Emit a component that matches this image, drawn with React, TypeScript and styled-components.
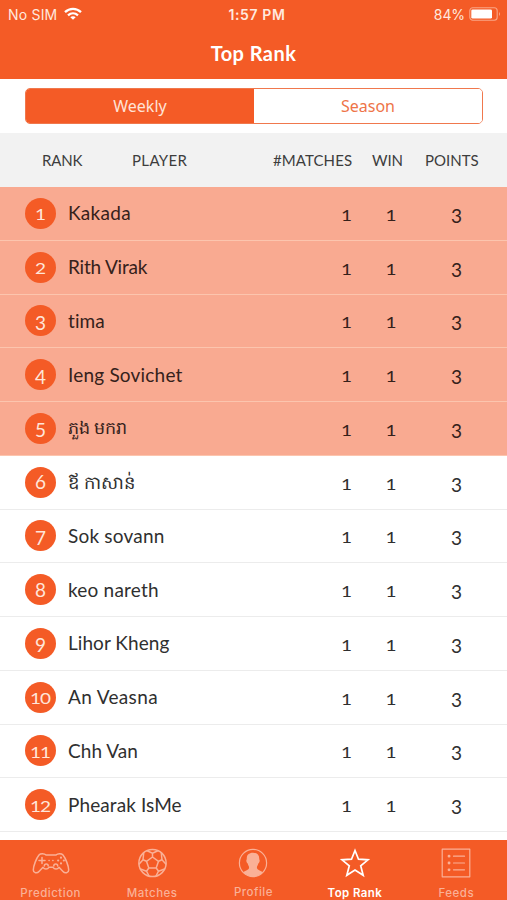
import React from "react";
import styled, { createGlobalStyle } from "styled-components";

const orange = "#f45b26";

const GlobalStyle = createGlobalStyle`
  * { box-sizing: border-box; }
  body { margin: 0; background: #fff; overflow: hidden; }
`;

const Screen = styled.main`
  width: 507px;
  height: 900px;
  display: flex;
  flex-direction: column;
  overflow: hidden;
  background: #fff;
  color: #2b2b2b;
  font-family: Lato, "Noto Sans", sans-serif;
`;

const Header = styled.header`
  height: 79px;
  flex: none;
  background: ${orange};
  color: #fff;
`;

const StatusBar = styled.div`
  height: 27px;
  padding: 1px 6px 0 8px;
  display: grid;
  grid-template-columns: 1fr auto 1fr;
  align-items: center;
  font: 400 14px Inter, sans-serif;
  color: #ffe9df;
`;

const StatusGroup = styled.div<{ $end?: boolean }>`
  display: flex;
  align-items: center;
  gap: ${(p) => (p.$end ? 4 : 7)}px;
  justify-content: ${(p) => (p.$end ? "flex-end" : "flex-start")};
  letter-spacing: ${(p) => (p.$end ? "-0.1px" : "0.2px")};
`;

const Clock = styled.time`
  font-weight: 600;
  font-size: 14px;
  letter-spacing: 0.6px;
  padding-left: 5px;
`;

const Title = styled.h1`
  margin: 0;
  height: 52px;
  line-height: 52px;
  text-align: center;
  font-size: 20px;
  font-weight: 700;
  letter-spacing: 0.45px;
`;

const Segments = styled.div`
  display: flex;
  flex: none;
  height: 36px;
  margin: 9px 24px 9px 25px;
  border: 1.5px solid #f0784d;
  border-radius: 5px;
  overflow: hidden;
`;

const Segment = styled.button<{ $active?: boolean }>`
  flex: 1;
  border: 0;
  padding: 0;
  background: ${(p) => (p.$active ? orange : "#fff")};
  color: ${(p) => (p.$active ? "#ffe3d6" : "#ee7448")};
  font: 400 16px "Noto Sans", sans-serif;
`;

const TableHead = styled.div`
  flex: none;
  height: 54px;
  background: #f2f2f2;
  display: grid;
  grid-template-columns: 132px 141px 99px 53px 1fr;
  align-items: center;
  font-size: 15px;
  color: #3d3d3d;
`;

const HeadCell = styled.span<{ $pad?: number; $ls: number }>`
  padding-left: ${(p) => p.$pad ?? 0}px;
  letter-spacing: ${(p) => p.$ls}px;
  white-space: nowrap;
`;

const Rows = styled.div`
  flex: 1;
  min-height: 0;
`;

const Row = styled.div<{ $top: boolean }>`
  height: 53.75px;
  display: grid;
  grid-template-columns: 68px 256px 45px 44px 87px;
  align-items: center;
  background: ${(p) => (p.$top ? "#f9aa91" : "#fff")};
  border-bottom: 1px solid ${(p) => (p.$top ? "#fcc5ae" : "#ececec")};
  color: ${(p) => (p.$top ? "#35211b" : "#2f2f2f")};
`;

const Badge = styled.span`
  width: 31px;
  height: 31px;
  margin-left: 25px;
  border-radius: 50%;
  background: ${orange};
  color: #ffe5d9;
  display: flex;
  align-items: center;
  justify-content: center;
  line-height: 24px;
`;

const Name = styled.span<{ $ls: number; $size?: number }>`
  font-size: ${(p) => p.$size ?? 19}px;
  line-height: 28px;
  letter-spacing: ${(p) => p.$ls}px;
  white-space: nowrap;
`;

const Score = styled.span`
  display: flex;
  justify-content: center;
  line-height: 24px;
  padding-top: 1px;
`;

const Digit = styled.span<{ $small: boolean; $drop: boolean }>`
  display: inline-block;
  font-size: 19px;
  transform: translateY(${(p) => (p.$drop ? 2 : 0)}px)
    scale(${(p) => (p.$small ? "1, 0.8" : "1, 1")});
  transform-origin: 50% 76%;
  margin: 0 -0.6px;
`;

const OldStyleNumber = ({ value }: { value: number }) => (
  <>
    {String(value).split("").map((d, i) => (
      <Digit key={i} $small={"012".includes(d)} $drop={"34579".includes(d)}>{d}</Digit>
    ))}
  </>
);

const TabBar = styled.nav`
  flex: none;
  height: 60px;
  background: ${orange};
  display: grid;
  grid-template-columns: repeat(5, 1fr);
`;

const Tab = styled.a<{ $active?: boolean; $raise?: boolean }>`
  display: flex;
  flex-direction: column;
  align-items: center;
  padding-top: 6px;
  color: ${(p) => (p.$active ? "#fff" : "#fab096")};
  font: ${(p) => (p.$active ? 600 : 500)} 11.5px/14px Inter, sans-serif;
  letter-spacing: ${(p) => (p.$active ? 0.4 : 0.5)}px;
  svg { flex: none; margin-bottom: ${(p) => (p.$raise ? 5 : 6)}px; }
`;

const iconProps = { width: 40, height: 34, viewBox: "0 0 40 34", fill: "none", stroke: "currentColor", strokeWidth: 1.5, strokeLinejoin: "round" as const, strokeLinecap: "round" as const };

const GamepadIcon = () => (
  <svg {...iconProps}>
    <path d="M8 9C9.5 7.3 13.5 7.5 15 9H25C26.5 7.5 30.5 7.3 32 9C34.5 12 37.7 20 37.7 24C37.7 27 34 27.8 32 25.5L28 21.3C26.5 23.8 23.5 23.6 22 21.3H18C16.5 23.6 13.5 23.8 12 21.3L8 25.5C6 27.8 2.3 27 2.3 24C2.3 20 5.5 12 8 9Z" />
    <path d="M11 11.5V17.5M8 14.5H14M18 14.5H18.2M21.8 14.5H22" />
    <path d="M13.3 20C13.3 17.2 17.2 17.2 17.2 20M22.8 20C22.8 17.2 26.7 17.2 26.7 20" />
    <path d="M30 11.6V11.7M30 17.3V17.4M27.1 14.5H27.2M32.8 14.5H32.9" strokeWidth="2.1" />
  </svg>
);

const BallIcon = () => (
  <svg {...iconProps}>
    <circle cx="20.5" cy="17" r="13.6" />
    <path transform="translate(.5)" d="M20 11L26 15.3L23.7 22H16.3L14 15.3ZM20 11V7.2M26 15.3L29.5 13.8M23.7 22L26 25.2M16.3 22L14 25.2M14 15.3L10.5 13.8M14.7 4.8L20 7.2L25.3 4.8M28.8 7L29.5 13.8L33.3 18M32 23L26 25.2L23.5 30M16.5 30L14 25.2L8 23M6.7 18L10.5 13.8L11.2 7" />
  </svg>
);

const ProfileIcon = () => (
  <svg {...iconProps} strokeWidth={1.2}>
    <circle cx="20" cy="17" r="13.6" />
    <path fill="currentColor" stroke="none" d="M20 6.8C24.5 6.8 26.6 9.4 26.2 13.3C27.2 13.8 26.5 17 25.3 17.5C24.9 19.2 23.9 20.2 23.9 21.5C23.9 24 27 24.2 29.8 26.2C25 32 15 32 10.2 26.2C13 24.2 16.1 24 16.1 21.5C16.1 20.2 15.1 19.2 14.7 17.5C13.5 17 12.8 13.8 13.8 13.3C13.4 9.4 15.5 6.8 20 6.8Z" />
  </svg>
);

const StarIcon = () => (
  <svg {...iconProps} strokeWidth={1.7} strokeLinejoin="miter">
    <path d="M20 4.5L23.5 13.2L33 13.8L25.7 19.8L28.2 29.3L20 24.1L11.8 29.3L14.3 19.8L7 13.8L16.5 13.2Z" />
  </svg>
);

const FeedsIcon = () => (
  <svg {...iconProps} strokeWidth={1.2}>
    <path d="M6.2 3.2H33.8V30.8H6.2ZM17.5 10.2H28.5M17.5 17H28.5M17.5 23.8H28.5" />
    <path strokeWidth="2.8" d="M13 10.2H13.1M13 17H13.1M13 23.8H13.1" />
  </svg>
);

const WifiIcon = () => (
  <svg width="18" height="14" viewBox="0 0 18 14" fill="none" stroke="#fff" strokeWidth="2.3">
    <path d="M1 5.2C5.6.8 12.4.8 17 5.2M4 8.3C7 5.6 11 5.6 14 8.3" />
    <path d="M9 12.8L6.3 10.2C7.8 8.9 10.2 8.9 11.7 10.2Z" fill="#fff" stroke="none" />
  </svg>
);

const BatteryIcon = () => (
  <svg width="32" height="14" viewBox="0 0 32 14" fill="none">
    <rect x=".8" y=".8" width="27.4" height="12.4" rx="3" stroke="#f9a687" strokeWidth="1.1" />
    <rect x="2.3" y="2.4" width="20.7" height="9.2" rx="1.4" fill="#fff" />
    <path d="M30 5Q32 7 30 9Z" fill="#f9a687" />
  </svg>
);

const players: { name: string; ls: number; size?: number }[] = [
  { name: "Kakada", ls: 0.3 },
  { name: "Rith Virak", ls: -0.2 },
  { name: "tima", ls: 0.1 },
  { name: "Ieng Sovichet", ls: 0.2 },
  { name: "ភួង មករា", ls: 0, size: 17.5 },
  { name: "ឪ កាសាន់", ls: 0, size: 18 },
  { name: "Sok sovann", ls: 0.2 },
  { name: "keo nareth", ls: 0.2 },
  { name: "Lihor Kheng", ls: 0.05 },
  { name: "An Veasna", ls: 0.35 },
  { name: "Chh Van", ls: 0.05 },
  { name: "Phearak IsMe", ls: 0.1 },
];

export default function App() {
  return (
    <Screen>
      <GlobalStyle />
      <Header>
        <StatusBar>
          <StatusGroup><span>No SIM</span><WifiIcon /></StatusGroup>
          <Clock>1:57 PM</Clock>
          <StatusGroup $end><span>84%</span><BatteryIcon /></StatusGroup>
        </StatusBar>
        <Title>Top Rank</Title>
      </Header>
      <Segments>
        <Segment $active>Weekly</Segment>
        <Segment>Season</Segment>
      </Segments>
      <TableHead>
        <HeadCell $pad={42} $ls={-0.2}>RANK</HeadCell>
        <HeadCell $ls={0.35}>PLAYER</HeadCell>
        <HeadCell $ls={0.1}>#MATCHES</HeadCell>
        <HeadCell $ls={-0.1}>WIN</HeadCell>
        <HeadCell $ls={0}>POINTS</HeadCell>
      </TableHead>
      <Rows>
        {players.map((p, i) => (
          <Row key={p.name} $top={i < 5}>
            <Badge><OldStyleNumber value={i + 1} /></Badge>
            <Name $ls={p.ls} $size={p.size}>{p.name}</Name>
            <Score><OldStyleNumber value={1} /></Score>
            <Score><OldStyleNumber value={1} /></Score>
            <Score><OldStyleNumber value={3} /></Score>
          </Row>
        ))}
      </Rows>
      <TabBar>
        <Tab><GamepadIcon />Prediction</Tab>
        <Tab><BallIcon />Matches</Tab>
        <Tab $raise><ProfileIcon />Profile</Tab>
        <Tab $active><StarIcon />Top Rank</Tab>
        <Tab><FeedsIcon />Feeds</Tab>
      </TabBar>
    </Screen>
  );
}
